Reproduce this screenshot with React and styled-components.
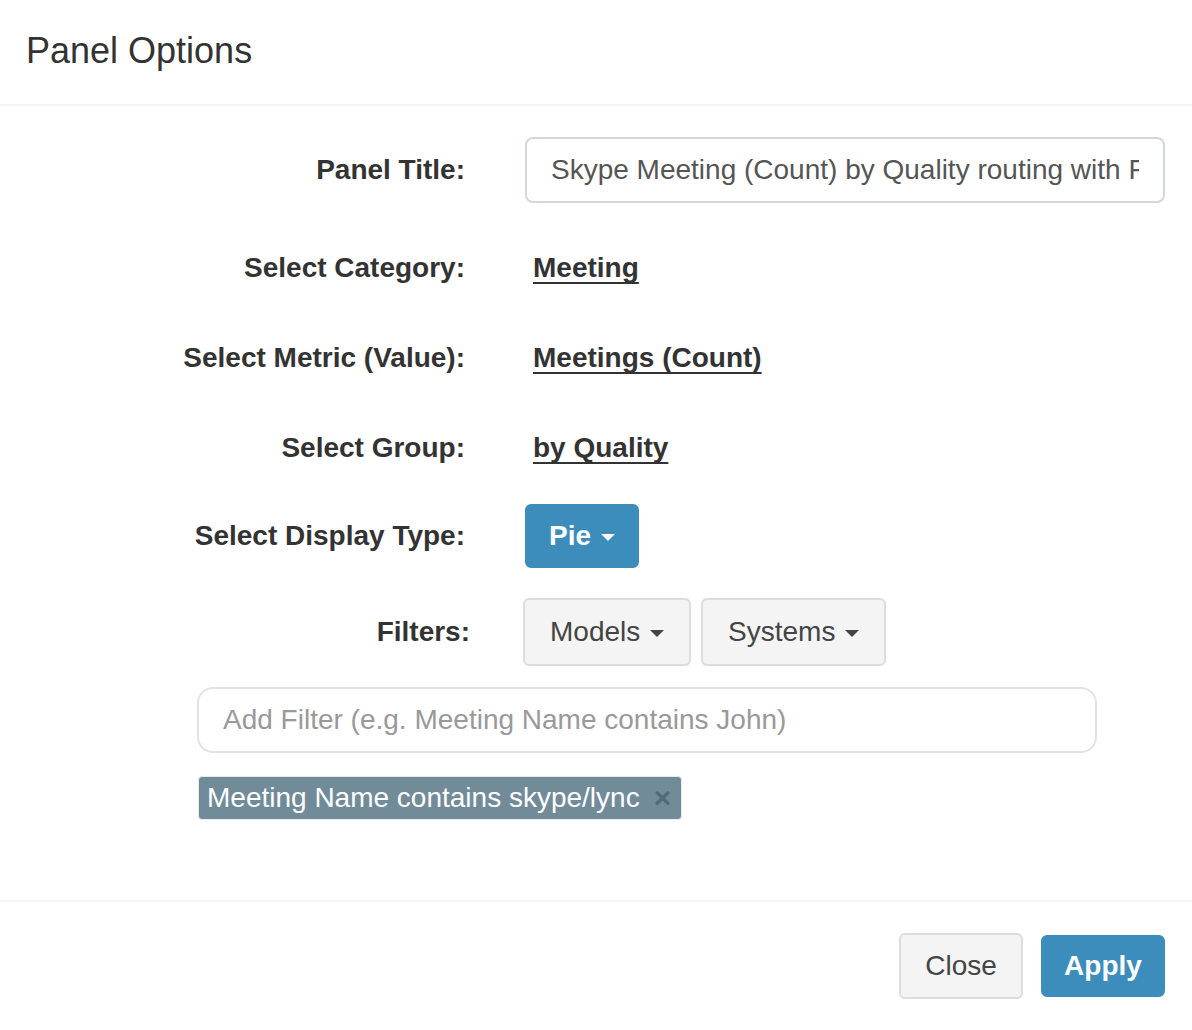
import React from 'react';
import styled, { createGlobalStyle } from 'styled-components';

const GlobalStyle = createGlobalStyle`
  body {
    margin: 0;
    background: #fff;
    font-family: "Liberation Sans", Arial, Helvetica, sans-serif;
    color: #333;
  }
`;

const rows = [
  { label: 'Select Category:', value: 'Meeting' },
  { label: 'Select Metric (Value):', value: 'Meetings (Count)' },
  { label: 'Select Group:', value: 'by Quality', gap: 26 }
];

export default function App() {
  return (
    <Modal>
      <GlobalStyle />
      <Header>
        <Title>Panel Options</Title>
      </Header>
      <Body>
        <Row $h={66} $gap={35}>
          <Label>Panel Title:</Label>
          <Value>
            <TextInput
              readOnly
              value="Skype Meeting (Count) by Quality routing with Filters"
            />
          </Value>
        </Row>
        {rows.map(row => (
          <Row key={row.label} $h={60} $gap={row.gap || 30}>
            <Label>{row.label}</Label>
            <Value>
              <Link href="#">{row.value}</Link>
            </Value>
          </Row>
        ))}
        <Row $h={64} $gap={30}>
          <Label>Select Display Type:</Label>
          <Value>
            <Button $primary>
              Pie <Caret />
            </Button>
          </Value>
        </Row>
        <Row $h={68} $gap={0}>
          <Label $nudge={5}>Filters:</Label>
          <Value $pull={2}>
            <ButtonGroup>
              <Button>
                Models <Caret />
              </Button>
              <Button>
                Systems <Caret />
              </Button>
            </ButtonGroup>
          </Value>
        </Row>
        <FilterInput placeholder="Add Filter (e.g. Meeting Name contains John)" />
        <Chips>
          <Chip>
            Meeting Name contains skype/lync
            <ChipClose>×</ChipClose>
          </Chip>
        </Chips>
      </Body>
      <Footer>
        <Button $wide>Close</Button>
        <Button $primary $wide $slim>
          Apply
        </Button>
      </Footer>
    </Modal>
  );
}

const Modal = styled.div`
  width: 1192px;
  background: #fff;
`;
const Header = styled.div`
  display: flex;
  align-items: center;
  height: 104px;
  padding: 0 26px;
  border-bottom: 2px solid #f4f4f4;
`;
const Title = styled.h4`
  margin: 0 0 2px;
  font-size: 36px;
  font-weight: normal;
  color: #333;
`;
const Body = styled.div`
  padding: 31px 27px 80px 0;
`;
const Row = styled.div`
  display: grid;
  grid-template-columns: 465px 1fr;
  column-gap: 60px;
  align-items: center;
  height: ${p => p.$h}px;
  margin-bottom: ${p => p.$gap}px;
`;
const Label = styled.label`
  text-align: right;
  font-size: 28px;
  font-weight: bold;
  color: #333;
  margin-right: ${p => -(p.$nudge || 0)}px;
`;
const Value = styled.div`
  display: flex;
  align-items: center;
  margin-left: ${p => -(p.$pull || 0)}px;
`;
const TextInput = styled.input`
  box-sizing: border-box;
  width: 100%;
  height: 66px;
  padding: 0 24px;
  border: 2px solid #d2d6de;
  border-radius: 8px;
  font-family: inherit;
  font-size: 28px;
  color: #555;
  outline: none;
`;
const Link = styled.a`
  margin-left: 8px;
  font-size: 28px;
  font-weight: bold;
  color: #333;
  text-decoration: underline;
  text-decoration-thickness: 2px;
  text-underline-offset: 5px;
  text-decoration-skip-ink: none;
`;
const ButtonGroup = styled.div`
  display: flex;
  gap: 10px;
`;
const Button = styled.button`
  box-sizing: border-box;
  display: inline-flex;
  align-items: center;
  justify-content: center;
  height: ${p => (p.$slim ? 62 : p.$primary ? 64 : 68)}px;
  ${p => p.$wide && 'width: 124px;'}
  ${p => p.$wide && !p.$primary && 'height: 66px;'}
  padding: 0 ${p => (p.$primary ? 22 : 25)}px;
  border: 2px solid ${p => (p.$primary ? '#3c8dbc' : '#ddd')};
  border-radius: 6px;
  background: ${p => (p.$primary ? '#3c8dbc' : '#f4f4f4')};
  color: ${p => (p.$primary ? '#fff' : '#444')};
  font-family: inherit;
  font-size: 28px;
  font-weight: ${p => (p.$primary ? 'bold' : 'normal')};
  cursor: pointer;
  white-space: pre;
`;
const Caret = styled.span`
  display: inline-block;
  width: 0;
  height: 0;
  margin-left: 2px;
  margin-top: 2px;
  border-top: 7px solid currentColor;
  border-left: 7px solid transparent;
  border-right: 7px solid transparent;
`;
const FilterInput = styled.input`
  display: block;
  box-sizing: border-box;
  width: 900px;
  height: 66px;
  margin: 21px 0 0 197px;
  padding: 0 24px;
  border: 2px solid #e3e3e3;
  border-radius: 16px;
  font-family: inherit;
  font-size: 28px;
  color: #555;
  outline: none;
  &::placeholder {
    color: #999;
  }
`;
const Chips = styled.div`
  display: flex;
  margin: 23px 0 0 198px;
`;
const Chip = styled.span`
  display: inline-flex;
  align-items: center;
  box-sizing: border-box;
  height: 44px;
  padding: 0 10px 0 8px;
  background: #718b99;
  border: 1px solid #e6eaec;
  border-radius: 4px;
  color: #fff;
  font-size: 28px;
`;
const ChipClose = styled.span`
  margin-left: 14px;
  font-size: 30px;
  line-height: 1;
  font-weight: bold;
  color: #566a75;
`;
const Footer = styled.div`
  display: flex;
  justify-content: flex-end;
  align-items: center;
  gap: 18px;
  padding: 31px 27px 31px 0;
  border-top: 2px solid #f4f4f4;
`;
